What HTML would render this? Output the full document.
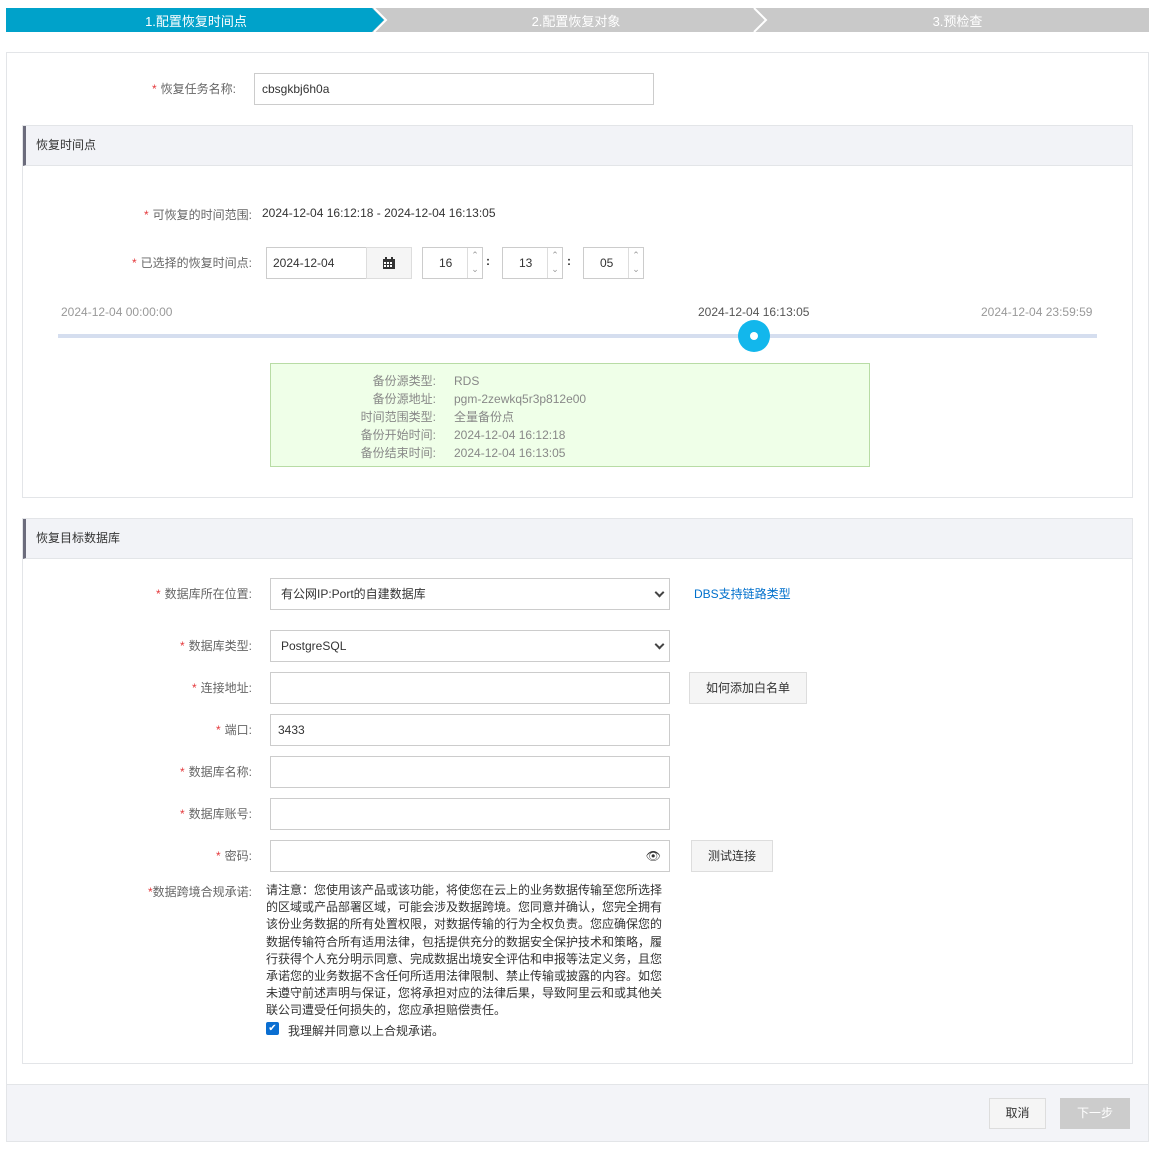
<!DOCTYPE html>
<html><head><meta charset="utf-8"><style>
*{box-sizing:border-box;margin:0;padding:0}
body{width:1154px;height:1169px;background:#fff;font-family:"Liberation Sans","Noto Sans CJK SC",sans-serif;font-size:12px;color:#333;position:relative;overflow:hidden}
.a{position:absolute}
.lbl{position:absolute;text-align:right;color:#666;white-space:nowrap}
.lbl b{color:#e4393c;font-weight:normal;margin-right:4px}
.inp{position:absolute;border:1px solid #ccc;background:#fff;height:32px;line-height:30px;padding-left:10px;color:#333}
.btn{position:absolute;border:1px solid #ddd;background:#f5f5f5;height:32px;line-height:30px;text-align:center;color:#333}
.sec{position:absolute;left:22px;width:1111px;border:1px solid #e3e5e8}
.sh{height:40px;background:#f2f3f7;border-left:3px solid #6c6c7c;line-height:38px;padding-left:10px;color:#333;border-bottom:1px solid #e3e5e8}
.chev{position:absolute;right:6px;top:10px;width:7px;height:7px;border-right:2px solid #444;border-bottom:2px solid #444;transform:rotate(45deg)}
.spin{position:absolute;right:0;top:0;width:15px;height:30px;border-left:1px solid #ddd;color:#999;font-size:9px;text-align:center;line-height:14px}
</style></head><body>
<svg class="a" style="left:6px;top:8px" width="1143" height="24">
<polygon points="0,0 1143,0 1143,24 0,24" fill="#c9c9c9"/>
<polygon points="0,0 366,0 378,12 366,24 0,24" fill="#00a2ca"/>
<polyline points="368,0 380,12 368,24" fill="none" stroke="#fff" stroke-width="2"/>
<polyline points="748,0 760,12 748,24" fill="none" stroke="#fff" stroke-width="2"/>
</svg>
<div class="a" style="left:6px;top:11px;width:380px;text-align:center;color:#fff;font-size:13px">1.配置恢复时间点</div>
<div class="a" style="left:386px;top:11px;width:380px;text-align:center;color:#fff;font-size:13px">2.配置恢复对象</div>
<div class="a" style="left:766px;top:11px;width:383px;text-align:center;color:#fff;font-size:13px">3.预检查</div>

<div class="a" style="left:6px;top:52px;width:1143px;height:1090px;border:1px solid #e3e5e8"></div>
<div class="a" style="left:7px;top:1084px;width:1141px;height:57px;background:#f3f4f8;border-top:1px solid #e3e5e8"></div>

<div class="lbl" style="right:918px;top:80px"><b>*</b>恢复任务名称:</div>
<div class="inp" style="left:254px;top:73px;width:400px;padding-left:7px">cbsgkbj6h0a</div>

<div class="sec" style="top:125px;height:373px"><div class="sh">恢复时间点</div></div>
<div class="lbl" style="right:902px;top:206px"><b>*</b>可恢复的时间范围:</div>
<div class="a" style="left:262px;top:206px">2024-12-04 16:12:18 - 2024-12-04 16:13:05</div>
<div class="lbl" style="right:902px;top:254px"><b>*</b>已选择的恢复时间点:</div>
<div class="inp" style="left:266px;top:247px;width:101px;padding-left:6px">2024-12-04</div>
<div class="btn" style="left:366px;top:247px;width:46px;background:#f5f5f5"><svg width="12" height="12" style="margin-top:9px"><rect x="0" y="2" width="12" height="10" fill="#333"/><rect x="2" y="0" width="2" height="3" fill="#333"/><rect x="8" y="0" width="2" height="3" fill="#333"/><g fill="#fff"><rect x="1" y="5" width="2" height="2"/><rect x="4" y="5" width="2" height="2"/><rect x="7" y="5" width="2" height="2"/><rect x="1" y="8" width="2" height="2"/><rect x="4" y="8" width="2" height="2"/><rect x="7" y="8" width="2" height="2"/></g></svg></div>
<div class="inp" style="left:422px;top:247px;width:61px;padding-left:16px">16<div class="spin">⌃<br>⌄</div></div>
<div class="a" style="left:486px;top:254px;font-weight:bold">:</div>
<div class="inp" style="left:502px;top:247px;width:61px;padding-left:16px">13<div class="spin">⌃<br>⌄</div></div>
<div class="a" style="left:567px;top:254px;font-weight:bold">:</div>
<div class="inp" style="left:583px;top:247px;width:61px;padding-left:16px">05<div class="spin">⌃<br>⌄</div></div>

<div class="a" style="left:61px;top:305px;color:#999">2024-12-04 00:00:00</div>
<div class="a" style="left:698px;top:305px;color:#555">2024-12-04 16:13:05</div>
<div class="a" style="left:981px;top:305px;color:#999">2024-12-04 23:59:59</div>
<div class="a" style="left:58px;top:334px;width:1039px;height:4px;background:#d5deef"></div>
<div class="a" style="left:738px;top:320px;width:32px;height:32px;border-radius:50%;background:#12b7ec"></div>
<div class="a" style="left:750px;top:332px;width:8px;height:8px;border-radius:50%;background:#fff"></div>

<div class="a" style="left:270px;top:363px;width:600px;height:104px;background:#efffe8;border:1px solid #b8dca5"></div>
<div class="a" style="left:300px;top:372px;width:136px;text-align:right;color:#888;line-height:18px">备份源类型:<br>备份源地址:<br>时间范围类型:<br>备份开始时间:<br>备份结束时间:</div>
<div class="a" style="left:454px;top:372px;color:#888;line-height:18px">RDS<br>pgm-2zewkq5r3p812e00<br>全量备份点<br>2024-12-04 16:12:18<br>2024-12-04 16:13:05</div>

<div class="sec" style="top:518px;height:546px"><div class="sh">恢复目标数据库</div></div>

<div class="lbl" style="right:902px;top:585px"><b>*</b>数据库所在位置:</div>
<div class="inp" style="left:270px;top:578px;width:400px">有公网IP:Port的自建数据库<div class="chev"></div></div>
<div class="a" style="left:694px;top:585px;color:#0070cc">DBS支持链路类型</div>
<div class="lbl" style="right:902px;top:637px"><b>*</b>数据库类型:</div>
<div class="inp" style="left:270px;top:630px;width:400px">PostgreSQL<div class="chev"></div></div>
<div class="lbl" style="right:902px;top:679px"><b>*</b>连接地址:</div>
<div class="inp" style="left:270px;top:672px;width:400px"></div>
<div class="btn" style="left:689px;top:672px;width:118px">如何添加白名单</div>
<div class="lbl" style="right:902px;top:721px"><b>*</b>端口:</div>
<div class="inp" style="left:270px;top:714px;width:400px;padding-left:7px">3433</div>
<div class="lbl" style="right:902px;top:763px"><b>*</b>数据库名称:</div>
<div class="inp" style="left:270px;top:756px;width:400px"></div>
<div class="lbl" style="right:902px;top:805px"><b>*</b>数据库账号:</div>
<div class="inp" style="left:270px;top:798px;width:400px"></div>
<div class="lbl" style="right:902px;top:847px"><b>*</b>密码:</div>
<div class="inp" style="left:270px;top:840px;width:400px"><span class="a" style="right:8px;top:0;font-size:12px;color:#333">👁</span></div>
<div class="btn" style="left:691px;top:840px;width:82px">测试连接</div>

<div class="lbl" style="right:902px;top:883px"><b style="margin-right:0">*</b>数据跨境合规承诺:</div>
<div class="a" style="left:266px;top:882px;width:402px;line-height:17.2px;color:#333">请注意：您使用该产品或该功能，将使您在云上的业务数据传输至您所选择的区域或产品部署区域，可能会涉及数据跨境。您同意并确认，您完全拥有该份业务数据的所有处置权限，对数据传输的行为全权负责。您应确保您的数据传输符合所有适用法律，包括提供充分的数据安全保护技术和策略，履行获得个人充分明示同意、完成数据出境安全评估和申报等法定义务，且您承诺您的业务数据不含任何所适用法律限制、禁止传输或披露的内容。如您未遵守前述声明与保证，您将承担对应的法律后果，导致阿里云和或其他关联公司遭受任何损失的，您应承担赔偿责任。</div>
<div class="a" style="left:266px;top:1022px;width:13px;height:13px;background:#0a6ed1;border-radius:2px;color:#fff;font-size:10px;line-height:13px;text-align:center">✔</div>
<div class="a" style="left:288px;top:1022px">我理解并同意以上合规承诺。</div>

<div class="btn" style="left:989px;top:1098px;width:57px;height:31px;line-height:29px">取消</div>
<div class="btn" style="left:1060px;top:1098px;width:70px;height:31px;line-height:29px;background:#ccc;border-color:#ccc;color:#fff">下一步</div>
</body></html>
